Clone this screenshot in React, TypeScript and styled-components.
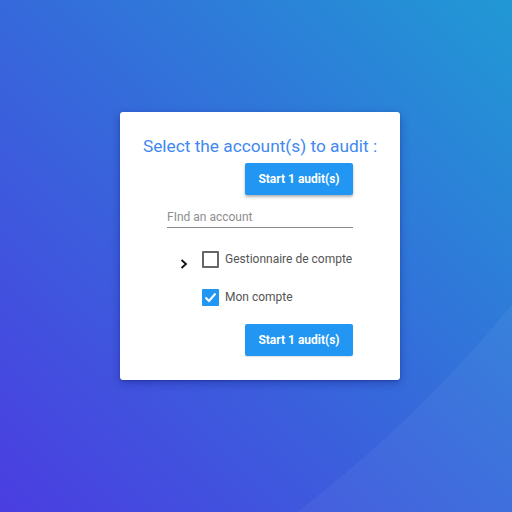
import React from "react";
import styled, { createGlobalStyle } from "styled-components";

const Global = createGlobalStyle`
  html, body { margin: 0; padding: 0; }
  body { font-family: Roboto, "Noto Sans", sans-serif; }
  * { box-sizing: border-box; }
`;

const Page = styled.div`
  position: relative;
  width: 512px;
  height: 512px;
  overflow: hidden;
  background: linear-gradient(45deg, #4b3de1 0%, #3669db 50%, #2199d5 100%);
  display: flex;
  align-items: flex-start;
  justify-content: center;
  padding-top: 112px;
  padding-left: 8px;
  &::after {
    content: "";
    position: absolute;
    inset: 0;
    background: radial-gradient(
      circle at -496px -525px,
      rgba(255, 255, 255, 0) 1305px,
      rgba(255, 255, 255, 0.045) 1306px
    );
    pointer-events: none;
  }
`;

const Card = styled.div`
  position: relative;
  z-index: 1;
  width: 280px;
  height: 268px;
  background: #fff;
  border-radius: 3px;
  box-shadow: 0 3px 10px rgba(10, 20, 120, 0.35), 0 1px 2px rgba(0, 0, 0, 0.2);
  display: flex;
  flex-direction: column;
  align-items: center;
  padding-top: 23px;
`;

const Title = styled.h2`
  margin: 0;
  font-size: 17.3px;
  line-height: 22px;
  font-weight: 400;
  color: #4189f0;
  white-space: nowrap;
`;

const Inner = styled.div`
  width: 186px;
  display: flex;
  flex-direction: column;
`;

const ButtonRow = styled.div<{ $top: number }>`
  display: flex;
  justify-content: flex-end;
  margin-top: ${(p) => p.$top}px;
`;

const Button = styled.button<{ $raised?: boolean }>`
  width: 108px;
  height: 32px;
  border: none;
  border-radius: 2px;
  background: #2196f3;
  color: #fff;
  font-family: Roboto, sans-serif;
  font-weight: 700;
  font-size: 12px;
  padding: 0;
  box-shadow: ${(p) =>
    p.$raised ? "0 2px 3px rgba(0,0,0,0.3)" : "0 1px 1px rgba(0,0,0,0.12)"};
`;

const SearchInput = styled.input`
  margin-top: 8px;
  width: 186px;
  height: 25px;
  border: none;
  border-bottom: 1px solid #8a8a8a;
  padding: 3px 0 0 0;
  font-family: Roboto, sans-serif;
  font-size: 12px;
  color: #333;
  outline: none;
  background: transparent;
  &::placeholder { color: #8e8e8e; }
`;

const Tree = styled.div`
  display: flex;
  flex-direction: column;
  margin-top: 23px;
  gap: 21px;
`;

const Row = styled.div`
  display: flex;
  align-items: center;
  height: 17px;
  white-space: nowrap;
`;

const Toggle = styled.span`
  width: 35px;
  flex: none;
  display: flex;
  justify-content: flex-start;
  padding-left: 13px;
  margin-top: 8px;
`;

const Box = styled.span<{ $checked?: boolean }>`
  width: 17px;
  height: 17px;
  flex: none;
  border-radius: 1px;
  border: ${(p) => (p.$checked ? "none" : "2px solid #666")};
  background: ${(p) => (p.$checked ? "#2196f3" : "#fff")};
  display: flex;
  align-items: center;
  justify-content: center;
`;

const Label = styled.span`
  margin-left: 6px;
  font-size: 12px;
  color: #555;
  margin-top: -2px;
`;

const Chevron = () => (
  <svg width="8" height="10" viewBox="0 0 8 10">
    <path d="M1.5 1 L6 5 L1.5 9" fill="none" stroke="#111" strokeWidth="1.8" />
  </svg>
);

const Check = () => (
  <svg width="13" height="11" viewBox="0 0 13 11">
    <path d="M1.5 5.5 L5 9 L11.5 1.5" fill="none" stroke="#fff" strokeWidth="2" />
  </svg>
);

export default function App() {
  return (
    <>
      <Global />
      <Page>
        <Card>
          <Title>Select the account(s) to audit :</Title>
          <Inner>
            <ButtonRow $top={6}>
              <Button $raised>Start 1 audit(s)</Button>
            </ButtonRow>
            <SearchInput placeholder="FInd an account" />
            <Tree>
              <Row>
                <Toggle><Chevron /></Toggle>
                <Box />
                <Label>Gestionnaire de compte</Label>
              </Row>
              <Row>
                <Toggle />
                <Box $checked><Check /></Box>
                <Label>Mon compte</Label>
              </Row>
            </Tree>
            <ButtonRow $top={18}>
              <Button>Start 1 audit(s)</Button>
            </ButtonRow>
          </Inner>
        </Card>
      </Page>
    </>
  );
}
